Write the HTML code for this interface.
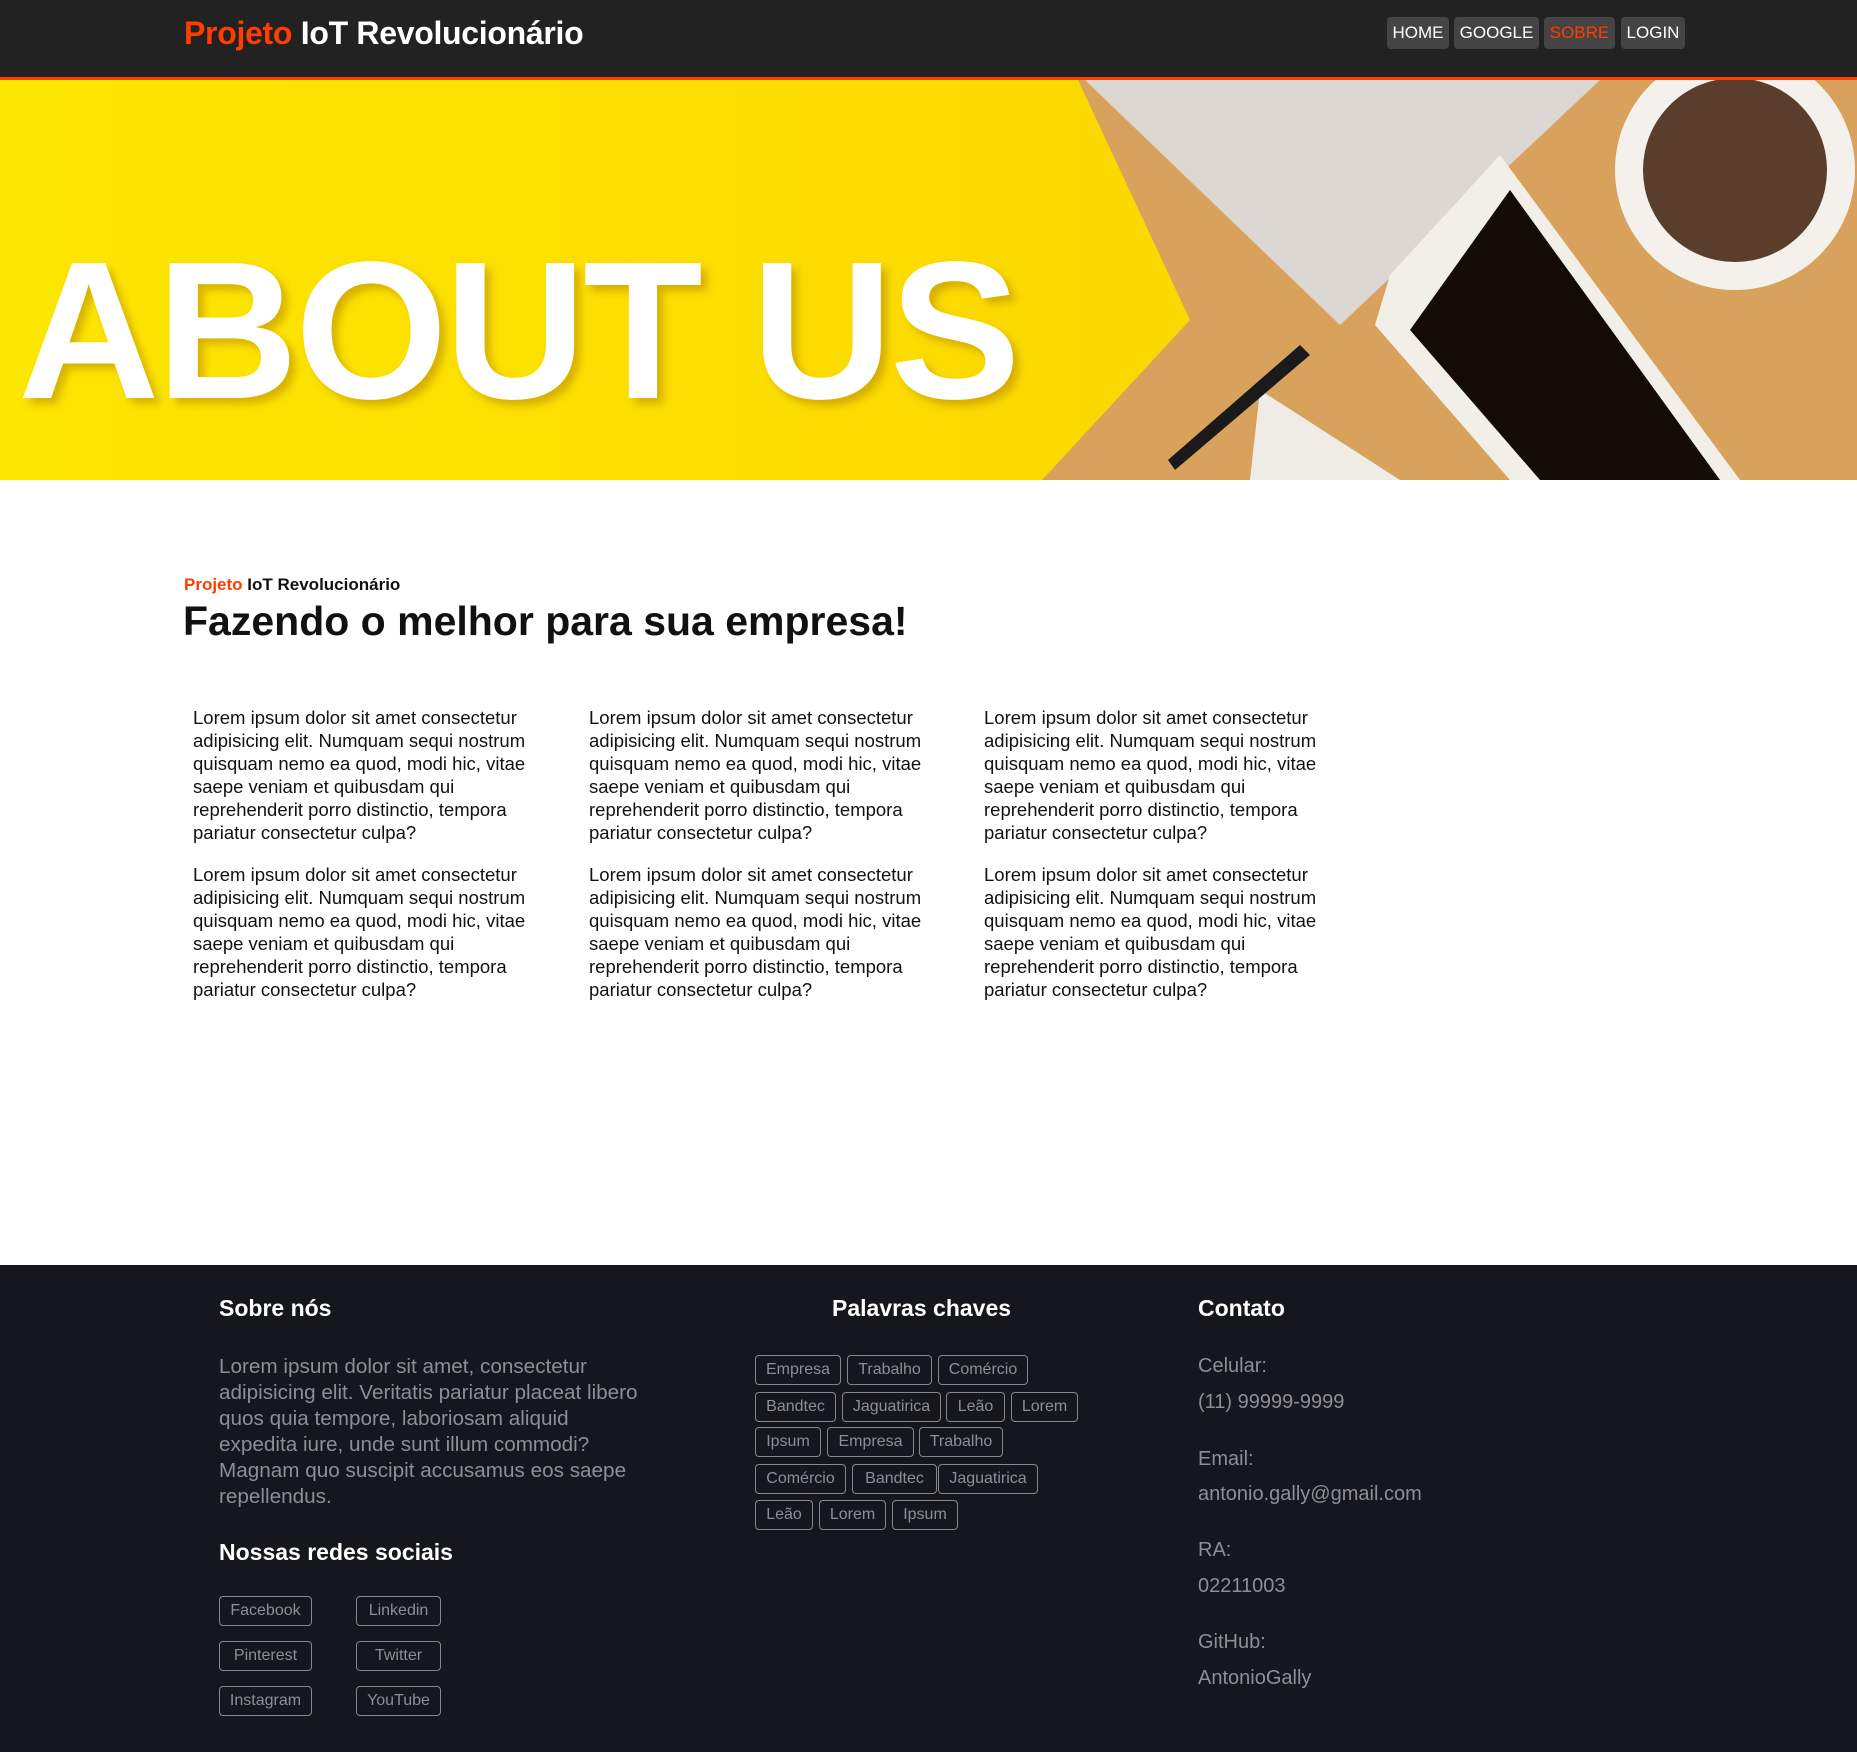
<!DOCTYPE html>
<html><head><meta charset="utf-8"><style>
*{margin:0;padding:0;box-sizing:border-box}
body{width:1857px;height:1752px;overflow:hidden;font-family:"Liberation Sans",sans-serif;background:#fff;position:relative}
.abs{position:absolute;white-space:nowrap}
nav{position:absolute;left:0;top:0;width:1857px;height:80px;background:#222;border-bottom:3px solid #ff3d00}
.logo{left:184px;top:15px;font-size:32px;font-weight:bold;color:#fff;letter-spacing:-0.3px}
.o{color:#ff3d00}
.btn{top:17px;height:32px;background:#444;border-radius:4px;color:#fff;font-size:17px;line-height:32px;text-align:center}
.hero{position:absolute;left:0;top:80px;width:1857px;height:400px;overflow:hidden;background:#d9a25c}
.col{position:absolute;top:706px;font-size:18.5px;line-height:23px;color:#111;white-space:nowrap}
.col p{margin-bottom:19px}
footer{position:absolute;left:0;top:1265px;width:1857px;height:487px;background:#15161e}
.h{font-size:23px;font-weight:bold;color:#fff}
.g{color:#8e8f95;font-size:20px}
.tag{position:absolute;height:30px;border:1px solid #888;border-radius:4px;color:#8e8f95;font-size:16px;line-height:28px;text-align:center}
</style></head><body>
<nav>
<div class="abs logo"><span class="o">Projeto</span> IoT Revolucionário</div>
<div class="abs btn" style="left:1387px;width:62px">HOME</div>
<div class="abs btn" style="left:1454px;width:85px">GOOGLE</div>
<div class="abs btn" style="left:1544px;width:71px;color:#ff3d00">SOBRE</div>
<div class="abs btn" style="left:1621px;width:64px">LOGIN</div>
</nav>
<div class="hero">
<svg width="1857" height="400" style="position:absolute;left:0;top:0">
<defs><linearGradient id="y" x1="0" x2="1"><stop offset="0" stop-color="#fde600"/><stop offset="1" stop-color="#fbd800"/></linearGradient></defs>
<rect width="1857" height="400" fill="#d9a25c"/>
<polygon points="1085,0 1600,0 1340,245" fill="#dcd7d2"/>
<polygon points="0,0 1078,0 1190,240 1042,400 0,400" fill="url(#y)"/>
<circle cx="1735" cy="90" r="120" fill="#f4f1ec"/>
<circle cx="1735" cy="90" r="92" fill="#5a3d2b"/>
<polygon points="1500,75 1740,400 1510,400 1375,245 1390,195" fill="#f2efe8"/>
<polygon points="1510,110 1720,400 1540,400 1410,250" fill="#140b06"/>
<polygon points="1260,310 1400,400 1250,400" fill="#efece6"/>
<polygon points="1300,265 1310,275 1175,390 1168,380" fill="#1a1a1a"/>
</svg>
<div class="abs" style="left:18px;top:138px;font-size:196px;font-weight:bold;color:#fff;letter-spacing:-3px;text-shadow:6px 6px 8px rgba(170,120,0,.45)">ABOUT US</div>
</div>
<div class="abs" style="left:184px;top:575px;font-size:17px;font-weight:bold;color:#111"><span class="o">Projeto</span> IoT Revolucionário</div>
<div class="abs" style="left:183px;top:598px;font-size:41px;font-weight:bold;color:#111">Fazendo o melhor para sua empresa!</div>
<div class="col" style="left:193px"><p>Lorem ipsum dolor sit amet consectetur<br>adipisicing elit. Numquam sequi nostrum<br>quisquam nemo ea quod, modi hic, vitae<br>saepe veniam et quibusdam qui<br>reprehenderit porro distinctio, tempora<br>pariatur consectetur culpa?</p><p>Lorem ipsum dolor sit amet consectetur<br>adipisicing elit. Numquam sequi nostrum<br>quisquam nemo ea quod, modi hic, vitae<br>saepe veniam et quibusdam qui<br>reprehenderit porro distinctio, tempora<br>pariatur consectetur culpa?</p></div>
<div class="col" style="left:589px"><p>Lorem ipsum dolor sit amet consectetur<br>adipisicing elit. Numquam sequi nostrum<br>quisquam nemo ea quod, modi hic, vitae<br>saepe veniam et quibusdam qui<br>reprehenderit porro distinctio, tempora<br>pariatur consectetur culpa?</p><p>Lorem ipsum dolor sit amet consectetur<br>adipisicing elit. Numquam sequi nostrum<br>quisquam nemo ea quod, modi hic, vitae<br>saepe veniam et quibusdam qui<br>reprehenderit porro distinctio, tempora<br>pariatur consectetur culpa?</p></div>
<div class="col" style="left:984px"><p>Lorem ipsum dolor sit amet consectetur<br>adipisicing elit. Numquam sequi nostrum<br>quisquam nemo ea quod, modi hic, vitae<br>saepe veniam et quibusdam qui<br>reprehenderit porro distinctio, tempora<br>pariatur consectetur culpa?</p><p>Lorem ipsum dolor sit amet consectetur<br>adipisicing elit. Numquam sequi nostrum<br>quisquam nemo ea quod, modi hic, vitae<br>saepe veniam et quibusdam qui<br>reprehenderit porro distinctio, tempora<br>pariatur consectetur culpa?</p></div>
<footer>
<div class="abs h" style="left:219px;top:30px">Sobre nós</div>
<div class="abs g" style="left:219px;top:89px;line-height:26px;font-size:20.7px">Lorem ipsum dolor sit amet, consectetur<br>adipisicing elit. Veritatis pariatur placeat libero<br>quos quia tempore, laboriosam aliquid<br>expedita iure, unde sunt illum commodi?<br>Magnam quo suscipit accusamus eos saepe<br>repellendus.</div>
<div class="abs h" style="left:219px;top:274px">Nossas redes sociais</div>
<div class="tag" style="left:219px;top:331px;width:93px">Facebook</div>
<div class="tag" style="left:356px;top:331px;width:85px">Linkedin</div>
<div class="tag" style="left:219px;top:376px;width:93px">Pinterest</div>
<div class="tag" style="left:356px;top:376px;width:85px">Twitter</div>
<div class="tag" style="left:219px;top:421px;width:93px">Instagram</div>
<div class="tag" style="left:356px;top:421px;width:85px">YouTube</div>
<div class="abs h" style="left:832px;top:30px">Palavras chaves</div>
<div class="tag" style="left:755px;top:90px;width:86px">Empresa</div>
<div class="tag" style="left:847px;top:90px;width:85px">Trabalho</div>
<div class="tag" style="left:938px;top:90px;width:90px">Comércio</div>
<div class="tag" style="left:755px;top:127px;width:81px">Bandtec</div>
<div class="tag" style="left:842px;top:127px;width:99px">Jaguatirica</div>
<div class="tag" style="left:946px;top:127px;width:59px">Leão</div>
<div class="tag" style="left:1011px;top:127px;width:67px">Lorem</div>
<div class="tag" style="left:755px;top:162px;width:66px">Ipsum</div>
<div class="tag" style="left:827px;top:162px;width:87px">Empresa</div>
<div class="tag" style="left:919px;top:162px;width:84px">Trabalho</div>
<div class="tag" style="left:755px;top:199px;width:91px">Comércio</div>
<div class="tag" style="left:852px;top:199px;width:85px">Bandtec</div>
<div class="tag" style="left:938px;top:199px;width:100px">Jaguatirica</div>
<div class="tag" style="left:755px;top:235px;width:58px">Leão</div>
<div class="tag" style="left:819px;top:235px;width:67px">Lorem</div>
<div class="tag" style="left:892px;top:235px;width:66px">Ipsum</div>
<div class="abs h" style="left:1198px;top:30px">Contato</div>
<div class="abs g" style="left:1198px;top:90px">Celular:</div>
<div class="abs g" style="left:1198px;top:126px">(11) 99999-9999</div>
<div class="abs g" style="left:1198px;top:183px">Email:</div>
<div class="abs g" style="left:1198px;top:218px">antonio.gally@gmail.com</div>
<div class="abs g" style="left:1198px;top:274px">RA:</div>
<div class="abs g" style="left:1198px;top:310px">02211003</div>
<div class="abs g" style="left:1198px;top:366px">GitHub:</div>
<div class="abs g" style="left:1198px;top:402px">AntonioGally</div>
</footer>
</body></html>
